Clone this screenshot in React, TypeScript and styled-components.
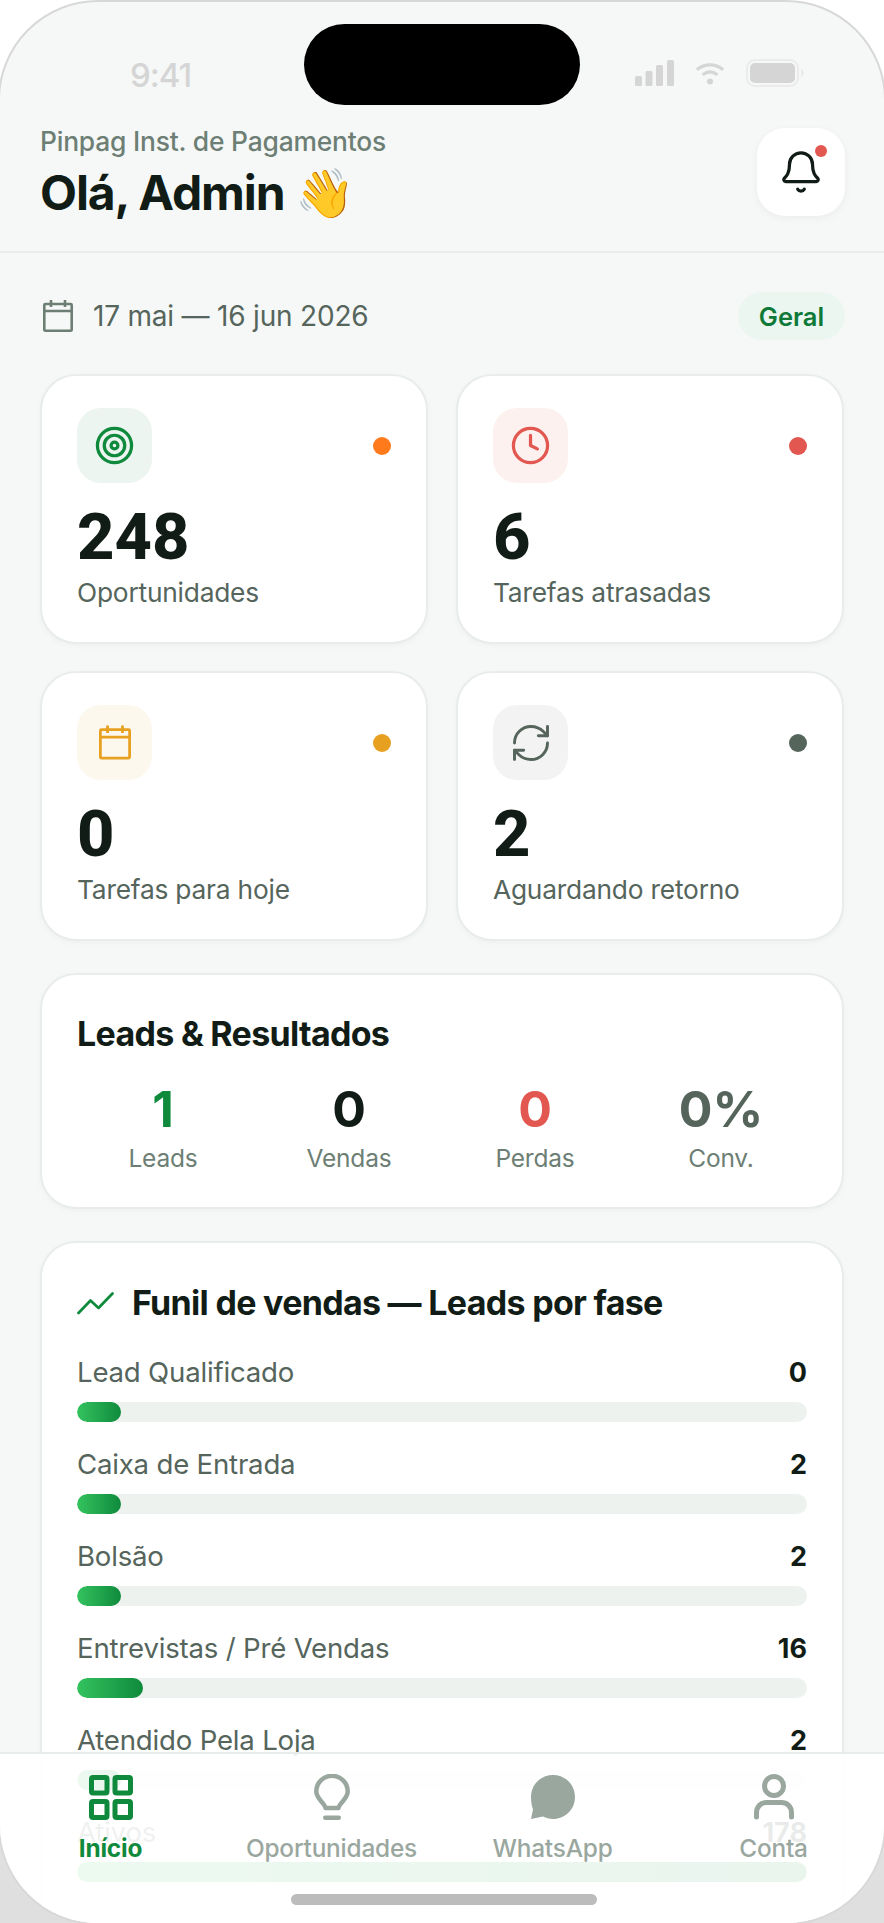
import React from 'react';
import styled, { createGlobalStyle } from 'styled-components';
import { Bell, Clock, RefreshCw, Target } from 'lucide-react';

const GlobalStyle = createGlobalStyle`
    html, body {
        margin: 0;
        padding: 0;
    }
    body {
        width: 884px;
        height: 1923px;
        overflow: hidden;
        font-family: Inter, "Noto Sans", sans-serif;
        background: linear-gradient(180deg, #ffffff 0%, #fbfbfb 60%, #dedede 100%);
    }
`;

const Phone = styled.div`
    position: relative;
    box-sizing: border-box;
    width: 888px;
    height: 1925px;
    margin-left: -2px;
    overflow: hidden;
    background: #f6f8f7;
    border: 2px solid #d8d8d8;
    border-radius: 100px;
`;

const StatusBar = styled.div`
    display: flex;
    align-items: center;
    justify-content: space-between;
    box-sizing: border-box;
    height: 126px;
    padding: 20px 80px 0 130px;
    color: #d5d5d5;
`;

const Clock941 = styled.span`
    font-size: 33px;
    font-weight: 500;
    letter-spacing: -1px;
`;

const Island = styled.div`
    position: absolute;
    top: 22px;
    left: 304px;
    width: 276px;
    height: 81px;
    border-radius: 41px;
    background: #000;
`;

const StatusIcons = styled.div`
    display: flex;
    align-items: center;
    gap: 21px;
    margin-top: -4px;
`;

const Header = styled.header`
    display: flex;
    align-items: flex-start;
    justify-content: space-between;
    box-sizing: border-box;
    height: 125px;
    padding: 0 39px 0 40px;
    border-bottom: 2px solid #e8ecea;
`;

const Org = styled.div`
    margin-top: -2px;
    color: #6d7f75;
    font-size: 26.4px;
    font-weight: 500;
    letter-spacing: -0.2px;
    line-height: 30px;
`;

const Hello = styled.h1`
    margin: 9px 0 0;
    color: #111c16;
    font-size: 48px;
    font-weight: 700;
    letter-spacing: -1.1px;
    line-height: 56px;
`;

const BellButton = styled.div`
    position: relative;
    display: flex;
    align-items: center;
    justify-content: center;
    width: 88px;
    height: 88px;
    border-radius: 28px;
    background: #fff;
    box-shadow: 0 2px 8px rgba(0, 0, 0, 0.05);
`;

const BellDot = styled.span`
    position: absolute;
    top: 17px;
    right: 18px;
    width: 12px;
    height: 12px;
    border-radius: 50%;
    background: #e2574f;
`;

const Content = styled.main`
    display: flex;
    flex-direction: column;
    padding: 0 40px;
`;

const DateRow = styled.div`
    display: flex;
    align-items: center;
    height: 48px;
    margin-top: 39px;
    color: #55655c;
`;

const DateIcon = styled.span`
    display: flex;
    margin-left: 3px;
    color: #6d7f75;
`;

const DateText = styled.span`
    flex: 1;
    margin-left: 20px;
    font-size: 28px;
    letter-spacing: -0.2px;
`;

const Pill = styled.span`
    display: flex;
    align-items: center;
    justify-content: center;
    width: 107px;
    height: 48px;
    margin-right: -1px;
    border-radius: 24px;
    background: #ecf6f0;
    color: #0f7a38;
    font-size: 25.5px;
    font-weight: 600;
`;

const CardGrid = styled.div`
    display: grid;
    grid-template-columns: 388px 388px;
    grid-auto-rows: 270px;
    gap: 27px 28px;
    margin-top: 34px;
`;

const Card = styled.section`
    box-sizing: border-box;
    border: 2px solid #e8ecea;
    border-radius: 36px;
    background: #fff;
    box-shadow: 0 2px 6px rgba(0, 0, 0, 0.03);
`;

const MetricCard = styled(Card)`
    padding: 32px 35px 0;
`;

const MetricTop = styled.div`
    display: flex;
    align-items: center;
    justify-content: space-between;
`;

const IconBox = styled.div<{ $bg: string; $color: string }>`
    display: flex;
    align-items: center;
    justify-content: center;
    width: 75px;
    height: 75px;
    border-radius: 24px;
    background: ${(props) => props.$bg};
    color: ${(props) => props.$color};
`;

const Dot = styled.span<{ $color: string }>`
    width: 18px;
    height: 18px;
    border-radius: 50%;
    background: ${(props) => props.$color};
`;

const MetricValue = styled.div`
    margin-top: 16px;
    color: #111c16;
    font-family: Roboto, Inter, sans-serif;
    font-size: 65px;
    font-weight: 800;
    line-height: 76px;
`;

const MetricLabel = styled.div`
    margin-top: 2px;
    color: #55655c;
    font-size: 26.3px;
    letter-spacing: -0.2px;
    line-height: 32px;
`;

const LeadsCard = styled(Card)`
    height: 236px;
    margin-top: 32px;
    padding: 39px 35px 0;
`;

const CardTitle = styled.h2`
    margin: 0;
    color: #111c16;
    font-size: 34px;
    font-weight: 700;
    letter-spacing: -0.7px;
    line-height: 40px;
`;

const Stats = styled.div`
    display: grid;
    grid-template-columns: repeat(4, 172px);
    gap: 14px;
    margin-top: 25px;
`;

const Stat = styled.div`
    display: flex;
    flex-direction: column;
    align-items: center;
`;

const StatValue = styled.div<{ $color: string }>`
    color: ${(props) => props.$color};
    font-size: 50px;
    font-weight: 700;
    line-height: 60px;
`;

const StatLabel = styled.div`
    margin-top: 4px;
    color: #6d7f75;
    font-size: 24.5px;
    letter-spacing: -0.2px;
    line-height: 30px;
`;

const FunnelCard = styled(Card)`
    margin-top: 32px;
    padding: 40px 35px 40px;
`;

const FunnelTitle = styled.div`
    display: flex;
    align-items: center;
    gap: 18px;
    margin-bottom: 31px;
`;

const Stage = styled.div`
    margin-bottom: 24px;
`;

const StageHead = styled.div`
    display: flex;
    align-items: center;
    justify-content: space-between;
    height: 36px;
    margin-bottom: 12px;
`;

const StageName = styled.span`
    color: #55655c;
    font-size: 27.6px;
    letter-spacing: -0.2px;
`;

const StageCount = styled.span`
    color: #111c16;
    font-size: 27px;
    font-weight: 700;
`;

const Track = styled.div`
    height: 20px;
    overflow: hidden;
    border-radius: 10px;
    background: #eef2ef;
`;

const Fill = styled.div`
    height: 100%;
    border-radius: 10px;
    background: linear-gradient(90deg, #34c35f, #0f8a3c);
`;

const BottomNav = styled.nav`
    position: absolute;
    left: 0;
    right: 0;
    bottom: 0;
    display: grid;
    grid-template-columns: repeat(4, 1fr);
    box-sizing: border-box;
    height: 171px;
    padding-top: 20px;
    border-top: 2px solid #e8ecea;
    background: rgba(255, 255, 255, 0.91);
`;

const NavItem = styled.div<{ $active?: boolean }>`
    display: flex;
    flex-direction: column;
    align-items: center;
    color: ${(props) => (props.$active ? '#0f8a3c' : '#9aa79f')};
    font-size: 24.4px;
    font-weight: ${(props) => (props.$active ? 700 : 500)};
    letter-spacing: -0.2px;
`;

const NavIcon = styled.div`
    display: flex;
    align-items: center;
    justify-content: center;
    height: 46px;
    margin-bottom: 13px;
`;

const HomeBar = styled.div`
    position: absolute;
    left: 291px;
    bottom: 18px;
    width: 306px;
    height: 11px;
    border-radius: 6px;
    background: #bcbcbc;
`;

const stages = [
    { name: 'Lead Qualificado', count: 0, pct: 6 },
    { name: 'Caixa de Entrada', count: 2, pct: 6 },
    { name: 'Bolsão', count: 2, pct: 6 },
    { name: 'Entrevistas / Pré Vendas', count: 16, pct: 9 },
    { name: 'Atendido Pela Loja', count: 2, pct: 6 },
    { name: 'Ativos', count: 178, pct: 100 },
];

function StatusGlyphs() {
    return (
        <StatusIcons>
            <svg width="39" height="28" viewBox="0 0 39 28" fill="currentColor">
                <rect x="0" y="17" width="7" height="10" rx="1.5" />
                <rect x="10.500" y="12" width="7" height="15" rx="1.5" />
                <rect x="21" y="6" width="7" height="21" rx="1.5" />
                <rect x="32" y="1" width="7" height="26" rx="1.5" />
            </svg>
            <svg width="30" height="28" viewBox="0 0 32 28" fill="none" stroke="currentColor" strokeWidth="3.4">
                <path d="M2 10.500c8-7 20-7 28 0" />
                <path d="M8 16c5-4 11-4 16 0" />
                <circle cx="16" cy="23" r="3.200" fill="currentColor" stroke="none" />
            </svg>
            <svg width="58" height="28" viewBox="0 0 58 28" fill="none">
                <rect x="1" y="1" width="51" height="26" rx="8" stroke="#ebebeb" strokeWidth="2" />
                <rect x="4" y="4" width="45" height="20" rx="5" fill="currentColor" />
                <path d="M55 10c2 1 3 2.500 3 4s-1 3-3 4z" fill="#ebebeb" />
            </svg>
        </StatusIcons>
    );
}

function CalendarGlyph({ width, height }: { width: number; height: number }) {
    return (
        <svg width={width} height={height} viewBox="0 0 30 32" fill="none" stroke="currentColor" strokeWidth="2.600">
            <rect x="1.300" y="4" width="27.400" height="26.700" rx="1" />
            <path d="M1.300 11h27.400M8 0v7M22 0v7" />
        </svg>
    );
}

function HomeIcon() {
    return (
        <svg width="44" height="45" viewBox="0 0 44 45" fill="none" stroke="currentColor" strokeWidth="5">
            <rect x="2.500" y="2.500" width="15.500" height="15.500" rx="1.500" />
            <rect x="26" y="2.500" width="15.500" height="15.500" rx="1.500" />
            <rect x="2.500" y="26.500" width="15.500" height="16" rx="1.500" />
            <rect x="26" y="26.500" width="15.500" height="16" rx="1.500" />
        </svg>
    );
}

function BulbIcon() {
    return (
        <svg width="36" height="46" viewBox="0 0 36 46" fill="none" stroke="currentColor" strokeWidth="4.500" strokeLinejoin="round">
            <path d="M11.500 34c-.500-5-9.200-9-9.200-16.500a15.700 15.700 0 0 1 31.400 0C33.700 25 25 29 24.500 34z" />
            <rect x="9" y="41.500" width="18" height="4.500" rx="2.200" fill="currentColor" stroke="none" />
        </svg>
    );
}

function ChatIcon() {
    return (
        <svg width="46" height="46" viewBox="0 0 46 46" fill="currentColor">
            <path d="M23 1c12.400 0 22 9.700 22 22s-9.600 22-22 22c-3.500 0-7-.9-10-2.400L1 45l2-9.500C1.800 32.300 1 27.700 1 23 1 10.700 10.600 1 23 1z" />
        </svg>
    );
}

function UserIcon() {
    return (
        <svg width="40" height="46" viewBox="0 0 40 46" fill="none" stroke="currentColor" strokeWidth="5" strokeLinecap="round">
            <circle cx="20" cy="12" r="9.500" />
            <path d="M2.500 43v-4c0-7 5-10.500 10-10.500h15c5 0 10 3.500 10 10.500v4" />
        </svg>
    );
}

function TrendLine() {
    return (
        <svg width="37" height="23" viewBox="0 0 37 23" fill="none" stroke="#0f8a3c" strokeWidth="2.700" strokeLinecap="round" strokeLinejoin="round">
            <path d="M1.500 21 13.500 8.500l8 7.500L35.500 1.500" />
        </svg>
    );
}

export default function App() {
    return (
        <>
            <GlobalStyle />
            <Phone>
                <StatusBar>
                    <Clock941>9:41</Clock941>
                    <StatusGlyphs />
                </StatusBar>
                <Island />
                <Header>
                    <div>
                        <Org>Pinpag Inst. de Pagamentos</Org>
                        <Hello>Olá, Admin 👋</Hello>
                    </div>
                    <BellButton>
                        <Bell size={46} color="#111c16" strokeWidth={1.7} />
                        <BellDot />
                    </BellButton>
                </Header>
                <Content>
                    <DateRow>
                        <DateIcon><CalendarGlyph width={30} height={32} /></DateIcon>
                        <DateText>17 mai — 16 jun 2026</DateText>
                        <Pill>Geral</Pill>
                    </DateRow>
                    <CardGrid>
                        <MetricCard>
                            <MetricTop>
                                <IconBox $bg="#ecf5ef" $color="#0f8a3c"><Target size={41} strokeWidth={1.9} /></IconBox>
                                <Dot $color="#ff7a1a" />
                            </MetricTop>
                            <MetricValue>248</MetricValue>
                            <MetricLabel>Oportunidades</MetricLabel>
                        </MetricCard>
                        <MetricCard>
                            <MetricTop>
                                <IconBox $bg="#fdf1f0" $color="#e2574f"><Clock size={41} strokeWidth={1.9} /></IconBox>
                                <Dot $color="#e2574f" />
                            </MetricTop>
                            <MetricValue>6</MetricValue>
                            <MetricLabel>Tarefas atrasadas</MetricLabel>
                        </MetricCard>
                        <MetricCard>
                            <MetricTop>
                                <IconBox $bg="#fdf8ee" $color="#e8a020"><CalendarGlyph width={32} height={35} /></IconBox>
                                <Dot $color="#e8a020" />
                            </MetricTop>
                            <MetricValue>0</MetricValue>
                            <MetricLabel>Tarefas para hoje</MetricLabel>
                        </MetricCard>
                        <MetricCard>
                            <MetricTop>
                                <IconBox $bg="#f3f3f3" $color="#55655c"><RefreshCw size={44} strokeWidth={1.6} /></IconBox>
                                <Dot $color="#55655c" />
                            </MetricTop>
                            <MetricValue>2</MetricValue>
                            <MetricLabel>Aguardando retorno</MetricLabel>
                        </MetricCard>
                    </CardGrid>
                    <LeadsCard>
                        <CardTitle>Leads &amp; Resultados</CardTitle>
                        <Stats>
                            <Stat><StatValue $color="#0f8a3c">1</StatValue><StatLabel>Leads</StatLabel></Stat>
                            <Stat><StatValue $color="#111c16">0</StatValue><StatLabel>Vendas</StatLabel></Stat>
                            <Stat><StatValue $color="#e2574f">0</StatValue><StatLabel>Perdas</StatLabel></Stat>
                            <Stat><StatValue $color="#55655c">0%</StatValue><StatLabel>Conv.</StatLabel></Stat>
                        </Stats>
                    </LeadsCard>
                    <FunnelCard>
                        <FunnelTitle>
                            <TrendLine />
                            <CardTitle>Funil de vendas — Leads por fase</CardTitle>
                        </FunnelTitle>
                        {stages.map((stage) => (
                            <Stage key={stage.name}>
                                <StageHead>
                                    <StageName>{stage.name}</StageName>
                                    <StageCount>{stage.count}</StageCount>
                                </StageHead>
                                <Track><Fill style={{ width: `${stage.pct}%` }} /></Track>
                            </Stage>
                        ))}
                    </FunnelCard>
                </Content>
                <BottomNav>
                    <NavItem $active><NavIcon><HomeIcon /></NavIcon>Início</NavItem>
                    <NavItem><NavIcon><BulbIcon /></NavIcon>Oportunidades</NavItem>
                    <NavItem><NavIcon><ChatIcon /></NavIcon>WhatsApp</NavItem>
                    <NavItem><NavIcon><UserIcon /></NavIcon>Conta</NavItem>
                </BottomNav>
                <HomeBar />
            </Phone>
        </>
    );
}
